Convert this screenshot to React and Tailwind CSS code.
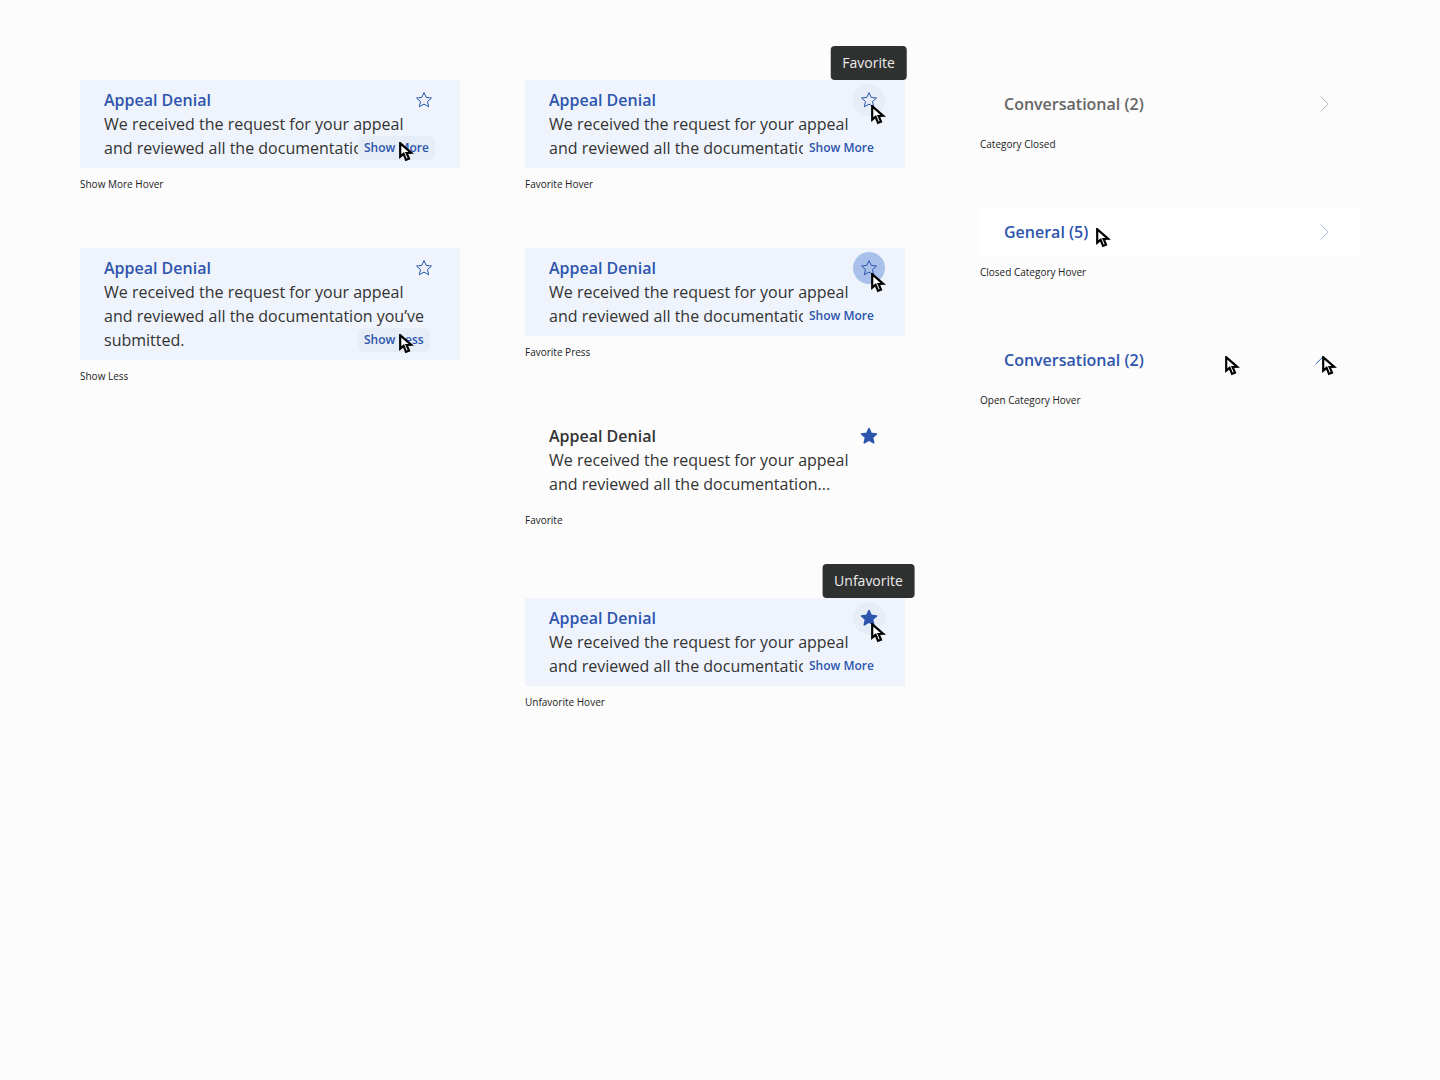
import React from 'react';

const BODY_SHORT = 'We received the request for your appeal and reviewed all the documentation you’ve submitted.';

// Arrow pointer drawn over the hovered controls
function Cursor({ className }) {
  return (
    <svg className={`absolute z-10 ${className}`} width="15" height="20" viewBox="0 0 15 20">
      <path
        d="M1.2 1.2 L1.2 14.6 L4.6 11.9 L7 17.9 L10 16.6 L7.6 11 L12.2 10.8 Z"
        fill="#fff"
        stroke="#000"
        strokeWidth="2.2"
        strokeLinejoin="miter"
      />
    </svg>
  );
}

function StarIcon({ filled }) {
  return (
    <svg width="18" height="18" viewBox="0 0 18 18">
      <path
        d="M9 1.6 L11.2 6.4 L16.5 7 L12.5 10.5 L13.7 15.8 L9 13.1 L4.3 15.8 L5.5 10.5 L1.5 7 L6.8 6.4 Z"
        fill={filled ? '#2d55ae' : 'none'}
        stroke="#2d55ae"
        strokeWidth={filled ? 1.6 : 1}
        strokeLinejoin="round"
      />
    </svg>
  );
}

function Chevron({ up, color }) {
  return (
    <svg width="10" height="16" viewBox="0 0 10 16" fill="none" className={up ? 'mr-0.5 -rotate-90' : ''}>
      <path d="M0.8 0.6 L8.2 8 L0.8 15.4" stroke={color} strokeWidth="1" />
    </svg>
  );
}

function Label({ children }) {
  return <p className="mt-2 text-[10px] leading-4 text-[#222]">{children}</p>;
}

function FavoriteButton({ filled, circle, tooltip }) {
  return (
    <div className={`absolute right-5 top-1 flex h-8 w-8 items-center justify-center rounded-full ${circle}`}>
      {tooltip && (
        <div className="absolute bottom-full left-[calc(50%-0.5px)] mb-1 -translate-x-1/2 whitespace-nowrap rounded bg-[#2f3131] px-3 py-[7px] text-sm leading-5 text-[#ececec]">
          {tooltip}
        </div>
      )}
      <StarIcon filled={filled} />
    </div>
  );
}

function MessageCard({ label, body = BODY_SHORT, expanded, moreLabel = 'Show More', moreClass = '', cursorClass, starCircle = '', filled, tooltip, plain }) {
  return (
    <div>
      <div className={`relative px-6 py-2 ${plain ? '' : 'bg-[#eff4fc]'}`}>
        <h3 className={`text-base font-semibold leading-6 ${plain ? 'text-[#333]' : 'text-[#2d55ae]'}`}>Appeal Denial</h3>
        <p className={`w-[332px] overflow-hidden text-base leading-6 text-[#333] ${expanded ? 'h-[72px]' : 'h-12'}`}>{body}</p>
        {!plain && (
          <button className={`absolute bottom-2 left-[278px] h-6 rounded-md px-1.5 text-xs font-semibold leading-6 text-[#2d55ae] ${moreClass || 'bg-[#eff4fc]'}`}>
            {moreLabel}
          </button>
        )}
        <FavoriteButton filled={filled} circle={starCircle} tooltip={tooltip} />
        {cursorClass && <Cursor className={cursorClass} />}
      </div>
      <Label>{label}</Label>
    </div>
  );
}

function CategoryRow({ label, title, titleClass, rowClass = '', chevronColor, up, children }) {
  return (
    <div>
      <div className={`relative flex h-12 items-center justify-between pl-6 pr-[30px] ${rowClass}`}>
        <h3 className={`text-base font-semibold leading-6 ${titleClass}`}>{title}</h3>
        <Chevron up={up} color={chevronColor} />
        {children}
      </div>
      <Label>{label}</Label>
    </div>
  );
}

export default function App() {
  return (
    <div className="flex min-h-screen items-start bg-[#fcfcfc] pl-20 pt-20" style={{ fontFamily: '"Open Sans", sans-serif' }}>
      {/* Column 1: show more / less */}
      <div className="flex w-[380px] flex-col gap-14">
        <MessageCard label="Show More Hover" moreClass="bg-[#e6edf7]" cursorClass="left-[319px] top-[62px]" />
        <MessageCard
          label="Show Less"
          expanded
          moreLabel="Show Less"
          moreClass="bg-[#e6edf7]"
          cursorClass="left-[319px] top-[86px]"
        />
      </div>

      {/* Column 2: favorite states */}
      <div className="ml-[65px] flex w-[380px] flex-col gap-14">
        <MessageCard label="Favorite Hover" starCircle="bg-[#e6edf7]" tooltip="Favorite" cursorClass="left-[346px] top-[25px]" />
        <MessageCard label="Favorite Press" starCircle="bg-[#a9c0ea]" cursorClass="left-[346px] top-[25px]" />
        <MessageCard
          label="Favorite"
          plain
          filled
          body="We received the request for your appeal and reviewed all the documentation..."
        />
        <div className="mt-3.5">
          <MessageCard label="Unfavorite Hover" starCircle="bg-[#e6edf7]" filled tooltip="Unfavorite" cursorClass="left-[346px] top-[25px]" />
        </div>
      </div>

      {/* Column 3: category rows */}
      <div className="ml-[75px] flex w-[380px] flex-col gap-14">
        <CategoryRow label="Category Closed" title="Conversational (2)" titleClass="text-[#666]" chevronColor="#b0b0b0" />
        <CategoryRow label="Closed Category Hover" title="General (5)" titleClass="text-[#2d55ae]" rowClass="bg-white" chevronColor="#a3b3da">
          <Cursor className="left-[116px] top-5" />
        </CategoryRow>
        <CategoryRow label="Open Category Hover" title="Conversational (2)" titleClass="text-[#2d55ae]" chevronColor="#2d55ae" up>
          <Cursor className="left-[245px] top-5" />
          <Cursor className="left-[342px] top-5" />
        </CategoryRow>
      </div>
    </div>
  );
}
